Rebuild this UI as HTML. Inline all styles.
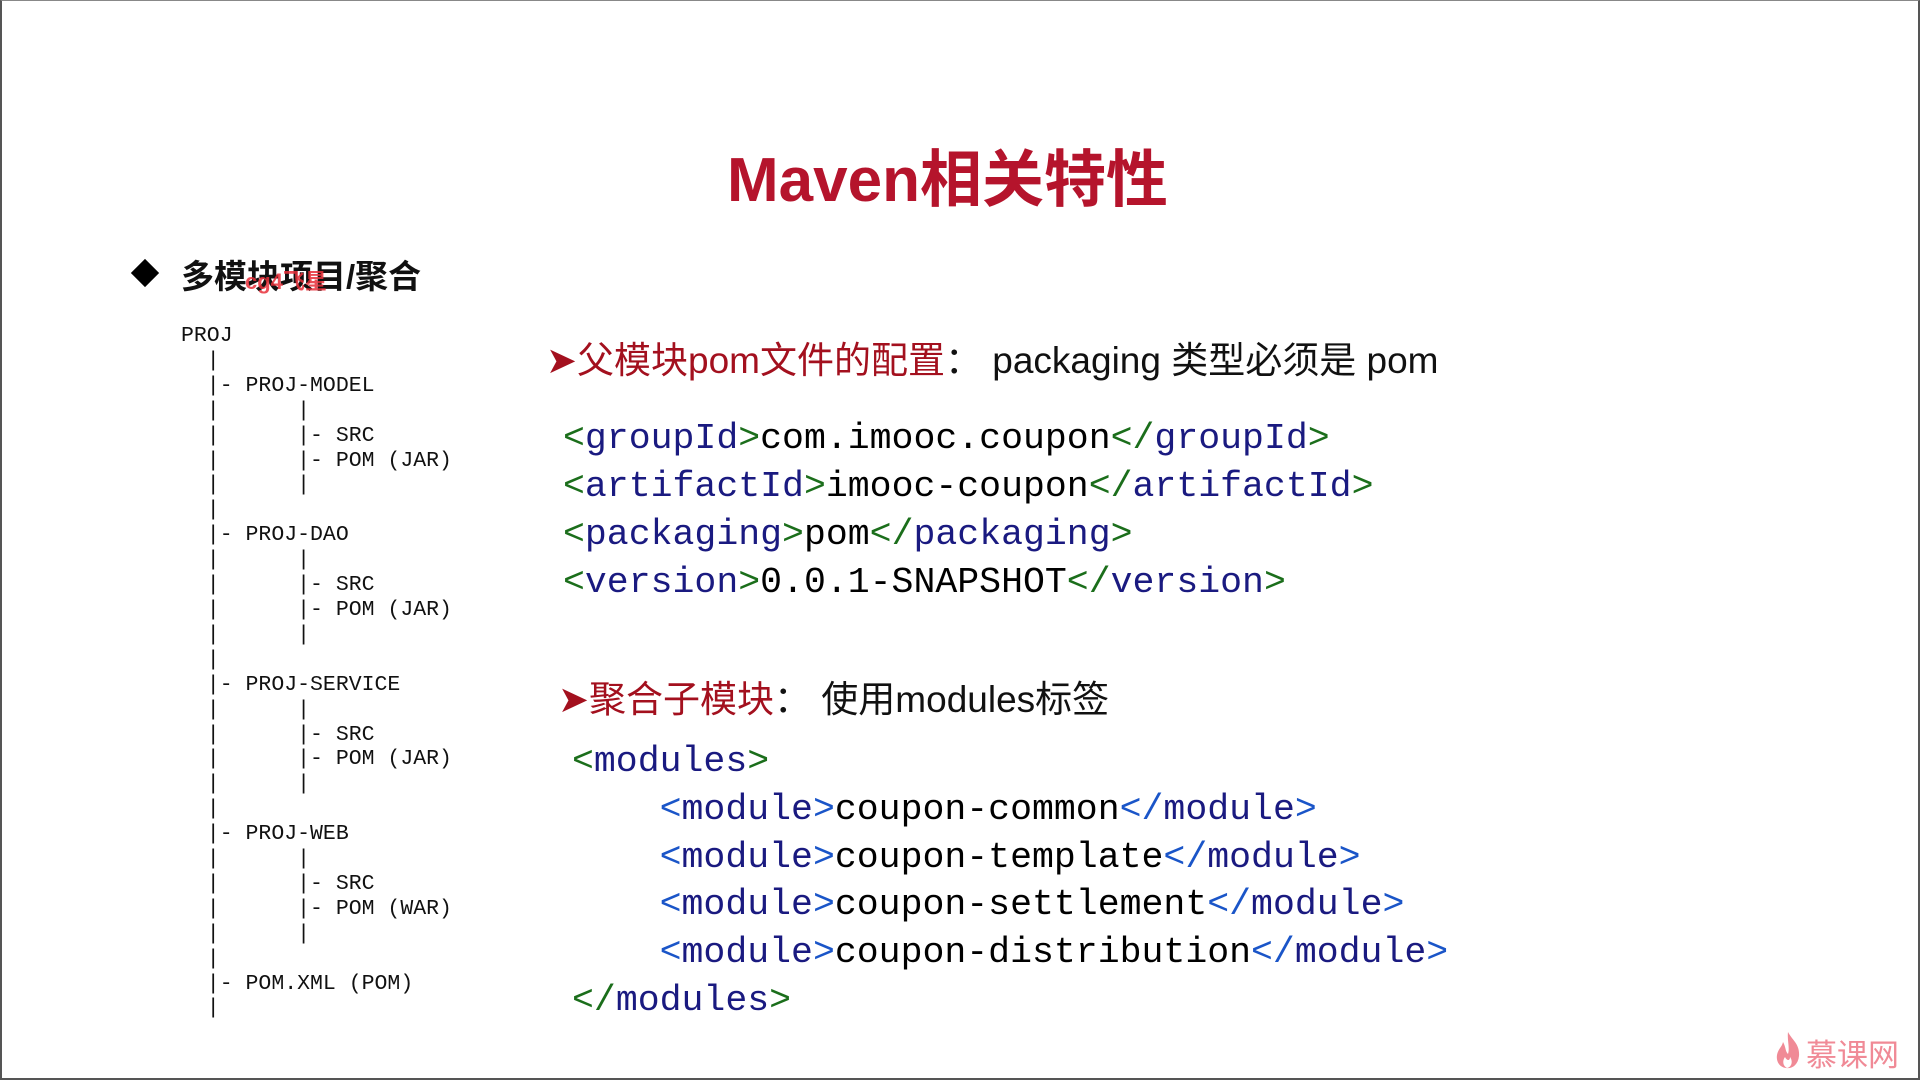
<!DOCTYPE html>
<html><head><meta charset="utf-8"><style>
html,body{margin:0;padding:0;background:#fff;}
body{width:1920px;height:1080px;position:relative;overflow:hidden;}
.frame{position:absolute;left:0;top:0;width:1916px;height:1077px;border:2px solid #555;border-top:1px solid #888;}
.t{position:absolute;white-space:pre;}
.title{left:727px;top:129px;font:bold 62px "Liberation Sans","Noto Sans CJK SC",sans-serif;color:#b5142c;}
.h1{left:181px;top:250px;font:bold 33px "Liberation Sans","Noto Sans CJK SC",sans-serif;color:#111;}
.dia{position:absolute;left:135px;top:263px;width:20px;height:20px;background:#000;transform:rotate(45deg);}
.tree{left:181px;top:324px;font:21.5px/24.9px "Liberation Mono",monospace;color:#111;}
.hd{font:37px "Liberation Sans","Noto Sans CJK SC",sans-serif;color:#111;}
.hd .r{color:#a3101e;}
.code{font:36.5px/48px "Liberation Mono",monospace;color:#000;}
.g{color:#1b6e1b}.n{color:#1a1a80}.b{color:#1a55c8}
.wm{left:1806px;top:1030px;font:31px "Liberation Sans","Noto Sans CJK SC",sans-serif;color:#f08a96;}
</style></head><body>
<div class="frame"></div>
<div class="t title">Maven相关特性</div>
<div class="dia"></div>
<div class="t h1">多模块项目/聚合</div>
<div class="t" style="left:245px;top:264px;font:bold 22px 'Liberation Sans','Noto Sans CJK SC',sans-serif;color:#e8303a;opacity:.85">cg4飞星</div>
<div class="t tree">PROJ
  |
  |- PROJ-MODEL
  |      |
  |      |- SRC
  |      |- POM (JAR)
  |      |
  |
  |- PROJ-DAO
  |      |
  |      |- SRC
  |      |- POM (JAR)
  |      |
  |
  |- PROJ-SERVICE
  |      |
  |      |- SRC
  |      |- POM (JAR)
  |      |
  |
  |- PROJ-WEB
  |      |
  |      |- SRC
  |      |- POM (WAR)
  |      |
  |
  |- POM.XML (POM)
  |</div>
<div class="t hd" style="left:546px;top:330px;"><span class="r">➤父模块pom文件的配置</span>： packaging 类型必须是 pom</div>
<div class="t code" style="left:563px;top:415px;"><span class="g">&lt;</span><span class="n">groupId</span><span class="g">&gt;</span>com.imooc.coupon<span class="g">&lt;/</span><span class="n">groupId</span><span class="g">&gt;</span>
<span class="g">&lt;</span><span class="n">artifactId</span><span class="g">&gt;</span>imooc-coupon<span class="g">&lt;/</span><span class="n">artifactId</span><span class="g">&gt;</span>
<span class="g">&lt;</span><span class="n">packaging</span><span class="g">&gt;</span>pom<span class="g">&lt;/</span><span class="n">packaging</span><span class="g">&gt;</span>
<span class="g">&lt;</span><span class="n">version</span><span class="g">&gt;</span>0.0.1-SNAPSHOT<span class="g">&lt;/</span><span class="n">version</span><span class="g">&gt;</span></div>
<div class="t hd" style="left:558px;top:669px;"><span class="r">➤聚合子模块</span>： 使用modules标签</div>
<div class="t code" style="left:572px;top:738px;line-height:47.8px;"><span class="g">&lt;</span><span class="n">modules</span><span class="g">&gt;</span>
    <span class="b">&lt;</span><span class="n">module</span><span class="b">&gt;</span>coupon-common<span class="b">&lt;/</span><span class="n">module</span><span class="b">&gt;</span>
    <span class="b">&lt;</span><span class="n">module</span><span class="b">&gt;</span>coupon-template<span class="b">&lt;/</span><span class="n">module</span><span class="b">&gt;</span>
    <span class="b">&lt;</span><span class="n">module</span><span class="b">&gt;</span>coupon-settlement<span class="b">&lt;/</span><span class="n">module</span><span class="b">&gt;</span>
    <span class="b">&lt;</span><span class="n">module</span><span class="b">&gt;</span>coupon-distribution<span class="b">&lt;/</span><span class="n">module</span><span class="b">&gt;</span>
<span class="g">&lt;/</span><span class="n">modules</span><span class="g">&gt;</span></div>
<svg style="position:absolute;left:1774px;top:1030px" width="28" height="40" viewBox="0 0 28 40"><path d="M14 2 C18 10 26 14 25 26 C24 35 18 39 12 38 C5 37 2 31 3 25 C4 19 8 17 9 12 C12 17 11 21 14 24 C16 18 13 10 14 2Z" fill="#f08a96"/><path d="M13 38 C9 36 8 31 11 27 C13 31 16 31 16 27 C19 31 18 37 13 38Z" fill="#fff"/></svg>
<div class="t wm">慕课网</div>
</body></html>
